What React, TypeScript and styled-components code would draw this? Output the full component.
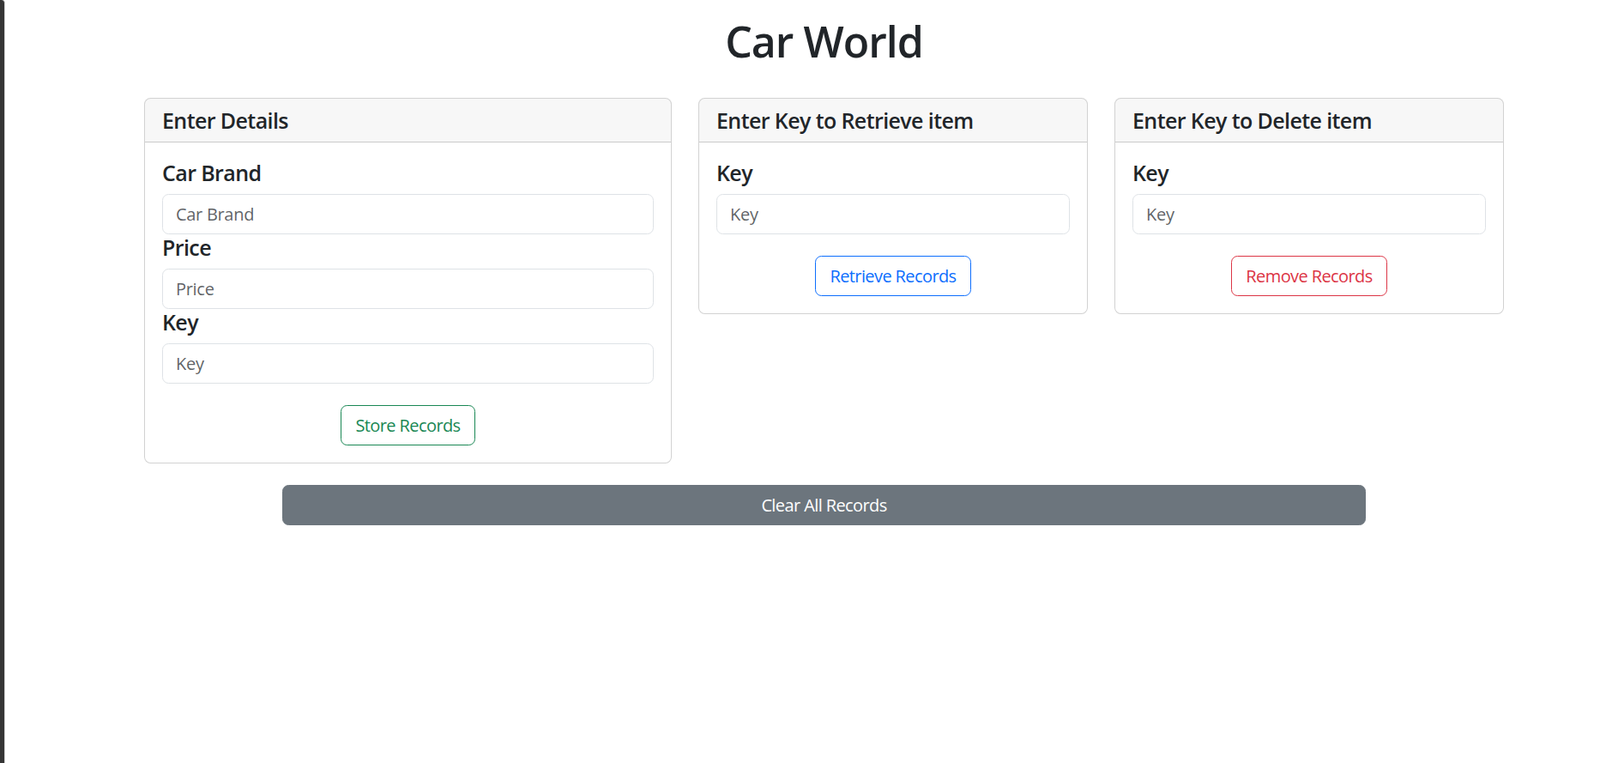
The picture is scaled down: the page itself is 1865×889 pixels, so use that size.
import React from "react";
import styled, { createGlobalStyle } from "styled-components";

const GlobalStyle = createGlobalStyle`
  *, *::before, *::after { box-sizing: border-box; }
  html, body {
    margin: 0;
    padding: 0;
    background: #ffffff;
    overflow: hidden;
  }
  body {
    font-family: "Segoe UI", "Open Sans", "Noto Sans", sans-serif;
    font-size: 20px;
    line-height: 1.5;
    color: #212529;
  }
`;

const Frame = styled.div`
  display: flex;
  width: 1915px;
  min-height: 100vh;
`;

const WindowEdge = styled.div`
  flex: 0 0 6px;
  background: #353535;
  border-right: 1px solid #d4d4d4;
  border-top-right-radius: 4px;
`;

const Main = styled.main`
  flex: 1;
  display: flex;
  flex-direction: column;
  align-items: center;
`;

const Title = styled.h1`
  margin: 18px 0 36px;
  font-size: 50px;
  font-weight: 600;
  line-height: 60px;
  letter-spacing: -1px;
`;

const CardRow = styled.div`
  display: flex;
  align-items: flex-start;
  gap: 31px;
`;

const Card = styled.section<{ $width: number }>`
  width: ${(p) => p.$width}px;
  border: 1px solid rgba(0, 0, 0, 0.175);
  border-radius: 7.5px;
  overflow: hidden;
  background: #ffffff;
`;

const CardHeader = styled.h5`
  margin: 0;
  padding: 10px 20px;
  background: rgba(0, 0, 0, 0.03);
  border-bottom: 1px solid rgba(0, 0, 0, 0.175);
  font-size: 25px;
  font-weight: 600;
  line-height: 30px;
  letter-spacing: -0.6px;
`;

const CardBody = styled.div`
  padding: 20px;
`;

const FieldLabel = styled.h5`
  margin: 0 0 10px;
  font-size: 25px;
  font-weight: 600;
  line-height: 30px;
  letter-spacing: -0.6px;
`;

const TextInput = styled.input`
  display: block;
  width: 100%;
  height: 47px;
  padding: 7px 15px;
  font-family: inherit;
  font-size: 20px;
  line-height: 30px;
  letter-spacing: -0.3px;
  color: #212529;
  background: #ffffff;
  border: 1px solid #dee2e6;
  border-radius: 7.5px;
  outline: none;

  &::placeholder {
    color: rgba(33, 37, 41, 0.72);
  }
`;

const Actions = styled.div`
  display: flex;
  justify-content: center;
  margin-top: 25px;
`;

const OutlineButton = styled.button<{ $tone: string }>`
  height: 47px;
  padding: 0 16px;
  font-family: inherit;
  font-size: 20px;
  line-height: 30px;
  letter-spacing: -0.6px;
  color: ${(p) => p.$tone};
  background: transparent;
  border: 1px solid ${(p) => p.$tone};
  border-radius: 7.5px;
  cursor: pointer;
`;

const ClearButton = styled.button`
  width: 1263px;
  height: 47px;
  margin-top: 25px;
  font-family: inherit;
  font-size: 20px;
  line-height: 30px;
  letter-spacing: -0.6px;
  color: #ffffff;
  background: #6c757d;
  border: 1px solid #6c757d;
  border-radius: 7.5px;
  cursor: pointer;
`;

type Field = { label: string; placeholder: string };

function FormCard(props: {
  width: number;
  title: string;
  fields: Field[];
  action: string;
  tone: string;
}) {
  return (
    <Card $width={props.width}>
      <CardHeader>{props.title}</CardHeader>
      <CardBody>
        {props.fields.map((f) => (
          <div key={f.label}>
            <FieldLabel>{f.label}</FieldLabel>
            <TextInput type="text" placeholder={f.placeholder} />
          </div>
        ))}
        <Actions>
          <OutlineButton $tone={props.tone}>{props.action}</OutlineButton>
        </Actions>
      </CardBody>
    </Card>
  );
}

export default function App() {
  return (
    <>
      <GlobalStyle />
      <Frame>
        <WindowEdge />
        <Main>
          <Title>Car World</Title>
          <CardRow>
            <FormCard
              width={615}
              title="Enter Details"
              fields={[
                { label: "Car Brand", placeholder: "Car Brand" },
                { label: "Price", placeholder: "Price" },
                { label: "Key", placeholder: "Key" },
              ]}
              action="Store Records"
              tone="#198754"
            />
            <FormCard
              width={454}
              title="Enter Key to Retrieve item"
              fields={[{ label: "Key", placeholder: "Key" }]}
              action="Retrieve Records"
              tone="#0d6efd"
            />
            <FormCard
              width={454}
              title="Enter Key to Delete item"
              fields={[{ label: "Key", placeholder: "Key" }]}
              action="Remove Records"
              tone="#dc3545"
            />
          </CardRow>
          <ClearButton>Clear All Records</ClearButton>
        </Main>
      </Frame>
    </>
  );
}
